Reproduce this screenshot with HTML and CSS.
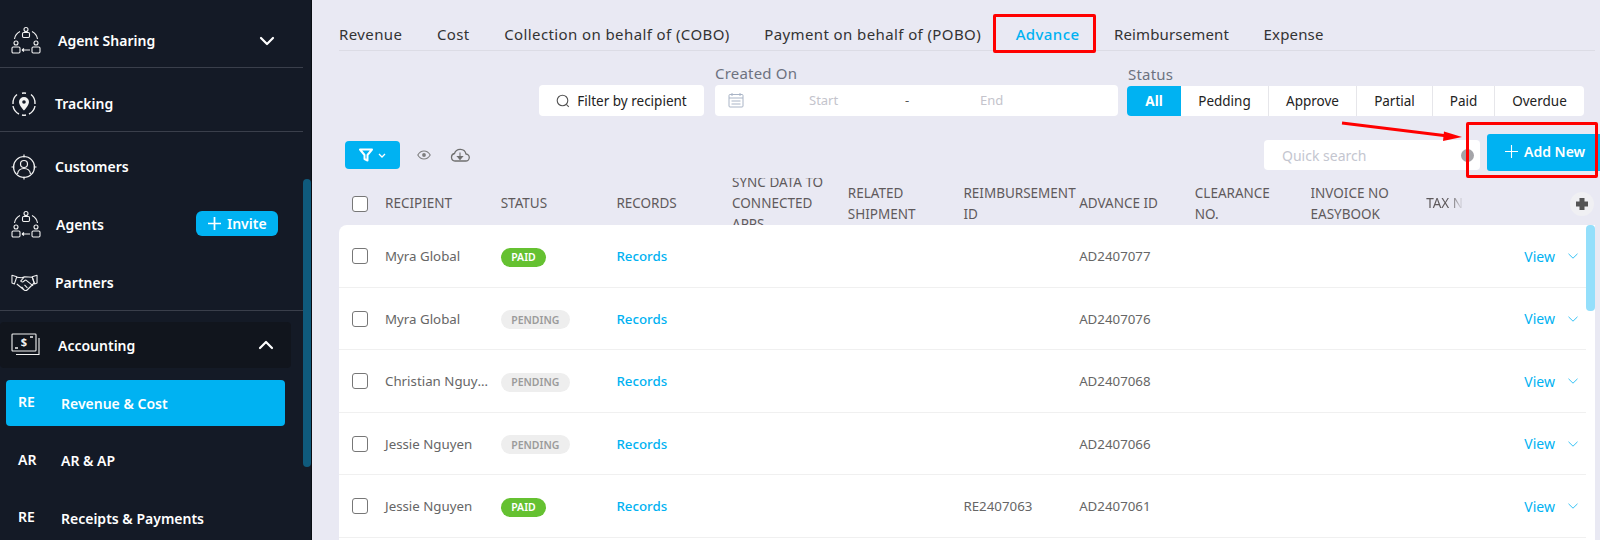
FILE: index.html
```html
<!DOCTYPE html>
<html lang="en">
<head>
<meta charset="utf-8">
<title>Revenue &amp; Cost</title>
<link rel="stylesheet" href="styles.css">
</head>
<body>
<svg class="defs" width="0" height="0">
  <symbol id="i-share" viewBox="0 0 30 30">
    <g fill="none" stroke="currentColor" stroke-width="1.1">
      <circle cx="15" cy="3.5" r="2"/><rect x="11.5" y="6.5" width="7" height="5" rx="1.2"/>
      <path d="M9 5.5C6 7 4 9.500 3.500 13M21 5.500C24 7 26 9.500 26.500 13"/>
      <circle cx="5" cy="17" r="2"/><rect x="1" y="21" width="8" height="6" rx="1.200"/>
      <circle cx="25" cy="17" r="2"/><rect x="21" y="21" width="8" height="6" rx="1.200"/>
      <path d="M11 24h8M11 24l2-1.500M11 24l2 1.500"/>
    </g>
  </symbol>
</svg>
<div class="app">
  <aside class="sidebar">
    <nav class="nav">
      <div class="group group-first">
        <div class="nav-item nav-parent">
          <svg class="ic ic-share"><use href="#i-share"/></svg>
          <span class="nav-label">Agent Sharing</span>
          <svg class="caret" viewBox="0 0 16 10"><path d="M2 2l6 6 6-6" fill="none" stroke="currentColor" stroke-width="2.200" stroke-linecap="round" stroke-linejoin="round"/></svg>
        </div>
      </div>
      <div class="group group-track">
        <div class="nav-item">
          <svg class="ic" viewBox="0 0 26 26"><g fill="none" stroke="currentColor" stroke-width="1.400"><path d="M6 3.500A11 11 0 0 0 2 13M11 2.200A11 11 0 0 1 15 2.200M20 3.500A11 11 0 0 1 24 13M24 15A11 11 0 0 1 18 23M15 24A11 11 0 0 1 11 24M8 23A11 11 0 0 1 2 15"/></g><path d="M13 6a5 5 0 0 0-5 5c0 3.500 5 8.500 5 8.500s5-5 5-8.500a5 5 0 0 0-5-5zm0 6.800a1.800 1.800 0 1 1 0-3.600 1.800 1.800 0 0 1 0 3.600z" fill="currentColor"/></svg>
          <span class="nav-text">Tracking</span>
        </div>
      </div>
      <div class="group group-people">
        <div class="nav-item">
          <svg class="ic" viewBox="0 0 26 26"><g fill="none" stroke="currentColor" stroke-width="1.200"><circle cx="13" cy="13" r="10.500"/><circle cx="13" cy="10" r="3.500"/><path d="M6.500 20c.5-4 3-5.500 6.500-5.500s6 1.500 6.500 5.500"/><path d="M13 .5v3M13 22.500v3M.5 13h3M22.500 13h3"/></g></svg>
          <span class="nav-text">Customers</span>
        </div>
        <div class="nav-item">
          <svg class="ic ic-share"><use href="#i-share"/></svg>
          <span class="nav-text nav-text-agents">Agents</span>
          <span class="invite"><svg class="invite-plus" viewBox="0 0 12 12"><path d="M6 0v12M0 6h12" stroke="currentColor" stroke-width="1.600"/></svg>Invite</span>
        </div>
        <div class="nav-item">
          <svg class="ic ic-hands" viewBox="0 0 28 18"><g fill="none" stroke="currentColor" stroke-width="1.100" stroke-linejoin="round"><path d="M1 1l5 1.500L3.500 10 1 9zM27 1l-5 1.500L24.500 10 27 9z"/><path d="M6 3l5 .5 3-1 8 .5M22 3l2 6-7 7c-1 1-2 1-3 .5L6 10M14 2.500L10 7c1 1.500 3 1 4-.5l1.500-.5L23 12M11 13l2 2M14 11l3 3"/></g></svg>
          <span class="nav-text">Partners</span>
        </div>
      </div>
      <div class="nav-item accounting">
        <svg class="ic ic-money" viewBox="0 0 30 24"><g fill="none" stroke="currentColor" stroke-width="1.100"><rect x="1" y="1" width="24" height="17" rx=".8"/><path d="M28 5v16.500H5"/><path d="M4 15h3M19 4h3" stroke-width="1.300"/></g><text class="money-sign" x="13" y="13" text-anchor="middle">$</text></svg>
        <span class="nav-label">Accounting</span>
        <svg class="caret" viewBox="0 0 16 10"><path d="M2 8l6-6 6 6" fill="none" stroke="currentColor" stroke-width="2.200" stroke-linecap="round" stroke-linejoin="round"/></svg>
      </div>
      <div class="sub-list">
        <div class="sub-item sub-active"><span class="sub-abbr">RE</span><span>Revenue &amp; Cost</span></div>
        <div class="sub-item"><span class="sub-abbr">AR</span><span>AR &amp; AP</span></div>
        <div class="sub-item"><span class="sub-abbr">RE</span><span>Receipts &amp; Payments</span></div>
      </div>
    </nav>
    <div class="side-track"><div class="side-thumb"></div></div>
  </aside>

  <main class="main">
    <div class="tabs">
      <span class="tab">Revenue</span>
      <span class="tab">Cost</span>
      <span class="tab">Collection on behalf of (COBO)</span>
      <span class="tab">Payment on behalf of (POBO)</span>
      <span class="tab tab-active">Advance</span>
      <span class="tab tab-tight">Reimbursement</span>
      <span class="tab tab-tight">Expense</span>
    </div>

    <div class="filters">
      <div class="filter-btn">
        <svg class="search-ic" viewBox="0 0 14 14"><circle cx="6.500" cy="6.500" r="5.300" fill="none" stroke="currentColor" stroke-width="1.100"/><path d="M10.300 10.300l2.500 2.500" stroke="currentColor" stroke-width="1.100"/></svg>
        Filter by recipient
      </div>
      <div class="field">
        <div class="field-label">Created On</div>
        <div class="date-range">
          <svg class="cal-ic" viewBox="0 0 16 16"><g fill="none" stroke="#a9b4c6" stroke-width="1"><rect x="1" y="2.500" width="14" height="12.500" rx="1"/><path d="M1 6h14M4 1v3M12 1v3M3.500 9h9M3.500 12h9" /></g></svg>
          <span class="date-start">Start</span>
          <span class="date-dash">-</span>
          <span class="date-end">End</span>
        </div>
      </div>
      <div class="field">
        <div class="field-label field-label-status">Status</div>
        <div class="segments">
          <span class="seg seg-on seg-all">All</span>
          <span class="seg seg-pedding">Pedding</span>
          <span class="seg seg-approve">Approve</span>
          <span class="seg seg-partial">Partial</span>
          <span class="seg seg-paid">Paid</span>
          <span class="seg seg-overdue">Overdue</span>
        </div>
      </div>
    </div>

    <div class="toolbar">
      <div class="filter-toggle">
        <svg class="funnel" viewBox="0 0 14 14"><path d="M1 1.500h12L8.500 7v5.500l-3-1.500V7z" fill="none" stroke="#fff" stroke-width="2" stroke-linejoin="round"/></svg>
        <svg class="funnel-caret" viewBox="0 0 8 5"><path d="M1 1l3 3 3-3" fill="none" stroke="#fff" stroke-width="1.300"/></svg>
      </div>
      <svg class="eye" viewBox="0 0 14 10"><path d="M.8 5C2.500 2 4.500 1 7 1s4.500 1 6.200 4C11.500 8 9.500 9 7 9S2.500 8 .8 5z" fill="none" stroke="#7d7d7d" stroke-width="1.100"/><circle cx="7" cy="5" r="1.900" fill="#7d7d7d"/></svg>
      <svg class="cloud" viewBox="0 0 20 14"><path d="M5 13h10.500a3.500 3.500 0 0 0 .5-7A6 6 0 0 0 4.500 5.500 3.800 3.800 0 0 0 5 13z" fill="none" stroke="#6f6f6f" stroke-width="1.300"/><path d="M10 4.500v6M7.500 8.500l2.500 3 2.500-3z" fill="#6f6f6f" stroke="#6f6f6f" stroke-width="1.100"/></svg>
      <div class="toolbar-space"></div>
      <div class="quick">
        <span class="quick-text">Quick search</span>
        <span class="quick-dot"></span>
      </div>
      <div class="add-new">
        <svg class="add-plus" viewBox="0 0 12 12"><path d="M6 0v12M0 6h12" stroke="#fff" stroke-width="1"/></svg>
        Add New
      </div>
    </div>

    <div class="thead">
      <span class="check"></span>
      <div class="th">RECIPIENT</div>
      <div class="th">STATUS</div>
      <div class="th">RECORDS</div>
      <div class="th">SYNC DATA TO CONNECTED APPS</div>
      <div class="th">RELATED SHIPMENT</div>
      <div class="th">REIMBURSEMENT ID</div>
      <div class="th">ADVANCE ID</div>
      <div class="th th-wrap">CLEARANCE NO.</div>
      <div class="th">INVOICE NO EASYBOOK</div>
      <div class="th th-fade">TAX NO</div>
      <div class="th-plus"><span class="plus-circle"><svg class="plus-ic" viewBox="0 0 12 12"><path d="M4 0h4v4h4v4H8v4H4V8H0V4h4z" fill="#555" stroke="#555" stroke-linejoin="round"/></svg></span></div>
    </div>

    <div class="tbody">
      <div class="rows">
        <div class="row"><span class="check"></span><div>Myra Global</div><div><span class="pill pill-paid">PAID</span></div><div class="link">Records</div><div></div><div></div><div></div><div>AD2407077</div><div></div><div class="view"><span>View</span><svg class="view-caret" viewBox="0 0 10 6"><path d="M.5.800L5 5.200 9.500.8" fill="none" stroke="currentColor" stroke-width=".8"/></svg></div></div>
        <div class="row"><span class="check"></span><div>Myra Global</div><div><span class="pill pill-pending">PENDING</span></div><div class="link">Records</div><div></div><div></div><div></div><div>AD2407076</div><div></div><div class="view"><span>View</span><svg class="view-caret" viewBox="0 0 10 6"><path d="M.5.800L5 5.200 9.500.8" fill="none" stroke="currentColor" stroke-width=".8"/></svg></div></div>
        <div class="row"><span class="check"></span><div class="ellip">Christian Nguyen</div><div><span class="pill pill-pending">PENDING</span></div><div class="link">Records</div><div></div><div></div><div></div><div>AD2407068</div><div></div><div class="view"><span>View</span><svg class="view-caret" viewBox="0 0 10 6"><path d="M.5.800L5 5.200 9.500.8" fill="none" stroke="currentColor" stroke-width=".8"/></svg></div></div>
        <div class="row"><span class="check"></span><div>Jessie Nguyen</div><div><span class="pill pill-pending">PENDING</span></div><div class="link">Records</div><div></div><div></div><div></div><div>AD2407066</div><div></div><div class="view"><span>View</span><svg class="view-caret" viewBox="0 0 10 6"><path d="M.5.800L5 5.200 9.500.8" fill="none" stroke="currentColor" stroke-width=".8"/></svg></div></div>
        <div class="row"><span class="check"></span><div>Jessie Nguyen</div><div><span class="pill pill-paid">PAID</span></div><div class="link">Records</div><div></div><div></div><div>RE2407063</div><div>AD2407061</div><div></div><div class="view"><span>View</span><svg class="view-caret" viewBox="0 0 10 6"><path d="M.5.800L5 5.200 9.500.8" fill="none" stroke="currentColor" stroke-width=".8"/></svg></div></div>
      </div>
      <div class="body-track"><div class="body-thumb"></div></div>
    </div>
  </main>
</div>

<div class="mark mark-tab"></div>
<div class="mark mark-add"></div>
<svg class="mark-arrow" viewBox="0 0 130 24"><path d="M2 3L108 16" stroke="#f00" stroke-width="3"/><path d="M104 11.500l18 5.500-19 4z" fill="#f00"/></svg>
</body>
</html>
```
FILE: styles.css
```css
* { box-sizing: border-box; }
html, body { margin: 0; height: 540px; overflow: hidden; }
body { font-family: "Noto Sans", "Open Sans", sans-serif; background: #e9e9f3; color: #333; position: relative; }
.defs { position: absolute; }
.app { display: flex; height: 540px; }

/* Sidebar */
.sidebar { width: 312px; flex: none; display: flex; background: #141a26; border-right: 1px solid #0a0d13; color: #fff; overflow: hidden; }
.nav { width: 303px; flex: none; font-size: 14px; font-weight: 600; }
.side-track { width: 8px; flex: none; }
.side-thumb { margin-top: 179px; height: 288px; background: #0f5a7c; border-radius: 4px 4px 4px 4px; }
.group { border-bottom: 1px solid #3a3f4b; }
.group-first { padding-top: 19px; padding-bottom: 4px; }
.group-track { padding: 14px 0 5px; }
.group-people { padding: 13px 0 5px; display: flex; flex-direction: column; gap: 14px; }
.nav-item { display: flex; align-items: center; height: 44px; padding-left: 11px; }
.ic { width: 26px; height: 26px; flex: none; margin-right: 18px; color: #f2f2f2; }
.ic-share { width: 30px; height: 30px; margin-right: 15px; }
.ic-hands { width: 27px; height: 18px; margin-right: 17px; }
.ic-money { width: 30px; height: 24px; margin-right: 16px; }
.money-sign { font: 700 11px "Noto Sans", sans-serif; fill: currentColor; }
.nav-label { flex: 1; padding: 0 0 2px 2px; }
.nav-text { flex: 1; padding-bottom: 2px; }
.nav-text-agents { padding-left: 0; }
.nav-parent { padding-right: 28px; }
.caret { width: 16px; height: 10px; flex: none; }
.invite { display: flex; align-items: center; gap: 6px; width: 82px; height: 25px; margin-right: 25px; padding-left: 12px; background: #00b2f2; border-radius: 6px; margin-top: -3px; }
.invite-plus { width: 13px; height: 13px; }
.accounting { height: 46px; width: 291px; margin-top: 11px; padding-right: 17px; background: #11151d; border-radius: 4px; }
.accounting .nav-label { padding: 0 0 0 1px; }
.sub-list { display: flex; flex-direction: column; gap: 11.500px; padding: 12px 18px 0 6px; }
.sub-item { display: flex; align-items: center; height: 46px; padding-left: 12px; border-radius: 4px; }
.sub-active { background: #00b2f2; }
.sub-abbr { width: 43px; flex: none; margin-top: -3px; }

/* Main */
.main { flex: 1; min-width: 0; padding: 0 5px 0 27px; }
.tabs { display: flex; gap: 34.500px; height: 51px; padding-top: 24px; border-bottom: 1.500px solid #dcdce5; font-size: 15px; line-height: 20px; letter-spacing: .4px; color: #333; }
.tab { white-space: nowrap; }
.tab-active { color: #00b2f2; font-weight: 500; }
.tab-tight { letter-spacing: .15px; }
.filters { display: flex; justify-content: flex-end; align-items: flex-end; gap: 11px; margin-top: 12px; padding-right: 11px; }
.filter-btn { display: flex; align-items: center; justify-content: center; gap: 7px; width: 165px; height: 31px; background: #fff; border-radius: 4px; font-size: 13.500px; color: #222; }
.search-ic { width: 14px; height: 14px; color: #555; }
.field-label { font-size: 15px; line-height: 20px; margin-bottom: 2px; color: #6d7280; letter-spacing: .2px; }
.field-label-status { margin-left: -1px; }
.date-range { display: flex; align-items: center; width: 403px; height: 31px; padding-bottom: 1px; background: #fff; border-radius: 4px; font-size: 13px; color: #c4c4cc; }
.cal-ic { width: 16px; height: 16px; margin-left: 13px; }
.date-start { margin-left: 65px; width: 96px; }
.date-dash { width: 75px; color: #555; }
.date-end { color: #c4c4cc; }
.segments { display: flex; height: 30px; background: #fff; border-radius: 4px; font-size: 13.500px; color: #222; margin-left: -2px; overflow: hidden; }
.seg { display: flex; align-items: center; justify-content: center; border-right: 1px solid #e6e6ea; }
.seg-on { background: #00b2f2; color: #fff; font-weight: 700; border-right: 0; }
.seg-all { width: 54px; }
.seg-pedding { width: 88px; }
.seg-approve { width: 88px; }
.seg-partial { width: 76px; }
.seg-paid { width: 62px; }
.seg-overdue { width: 89px; border-right: 0; }

.toolbar { display: flex; align-items: flex-start; height: 37px; margin: 18px -5px 0 0; padding-left: 6px; }
.filter-toggle { display: flex; align-items: center; justify-content: center; gap: 5px; width: 55px; height: 28px; margin-top: 7px; background: #00b2f2; border-radius: 4px; }
.funnel { width: 14px; height: 14px; }
.funnel-caret { width: 8px; height: 5px; }
.eye { width: 14px; height: 10px; margin: 16px 0 0 17px; }
.cloud { width: 20px; height: 14px; margin: 14px 0 0 19px; }
.toolbar-space { flex: 1; }
.quick { display: flex; align-items: center; justify-content: space-between; width: 216px; height: 30px; margin-top: 6px; padding: 0 6px 0 18px; background: #fff; border-radius: 4px; font-size: 14px; color: #c4c6d0; }
.quick-dot { width: 13px; height: 13px; border-radius: 50%; background: #a4a4a8; }
.add-new { display: flex; align-items: center; gap: 6px; width: 113px; height: 37px; margin-left: 7px; padding: 0 0 2px 18px; background: #00b2f2; color: #fff; font-size: 14px; font-weight: 600; border-radius: 3px 0 0 3px; }
.add-plus { width: 13px; height: 13px; }

/* Table */
.thead { display: grid; grid-template-columns: 46px repeat(10, 115.700px) 1fr; align-items: center; height: 47px; margin-top: 7px; padding-top: 4px; overflow: hidden; font-size: 13.500px; line-height: 21px; color: #5f5a5c; }
.thead .check { margin-left: 12.500px; }
.th { overflow: hidden; padding-right: 5px; }
.th-wrap { padding-right: 20px; }
.th-fade { width: 38px; padding: 0; white-space: nowrap; -webkit-mask-image: linear-gradient(to right, #000 60%, transparent 100%); mask-image: linear-gradient(to right, #000 60%, transparent 100%); }
.th-plus { display: flex; justify-content: flex-end; padding-right: 1px; }
.plus-circle { display: flex; align-items: center; justify-content: center; flex: none; width: 24px; height: 24px; border-radius: 50%; background: #f0f0f3; }
.plus-ic { width: 12px; height: 12px; }
.check { display: block; width: 16px; height: 16px; border: 1.500px solid #777; border-radius: 3px; background: #fff; }

.tbody { display: flex; height: 315px; background: #fff; border-radius: 8px 0 0 0; }
.rows { flex: 1; min-width: 0; }
.row { display: grid; grid-template-columns: 46px repeat(7, 115.700px) 1fr auto; align-items: center; height: 62.500px; padding-top: 1px; border-bottom: 1px solid #f0f0f0; font-size: 13.300px; color: #666; }
.row .check { margin-left: 12.500px; }
.ellip { white-space: nowrap; overflow: hidden; text-overflow: ellipsis; padding-right: 8px; }
.link { color: #00b2f2; font-weight: 500; }
.pill { display: inline-flex; align-items: center; height: 19px; margin-top: 2px; padding: 0 10.500px; border-radius: 10px; font-size: 10.500px; font-weight: 600; }
.pill-paid { background: #65c131; color: #fff; }
.pill-pending { background: #eee; color: #9b9b9b; }
.view { display: flex; align-items: center; gap: 13px; padding-right: 8px; color: #00b2f2; font-size: 14px; }
.view-caret { width: 10px; height: 6px; }
.body-track { width: 9px; flex: none; }
.body-thumb { height: 86px; background: #94dffb; border-radius: 4px; }

/* Red annotations drawn over the screenshot */
.mark { position: absolute; border: 3px solid #f00; border-radius: 2px; }
.mark-tab { left: 993px; top: 14px; width: 103px; height: 39px; }
.mark-add { left: 1466px; top: 122px; width: 132px; height: 56px; }
.mark-arrow { position: absolute; left: 1340px; top: 120px; width: 130px; height: 24px; }
```
